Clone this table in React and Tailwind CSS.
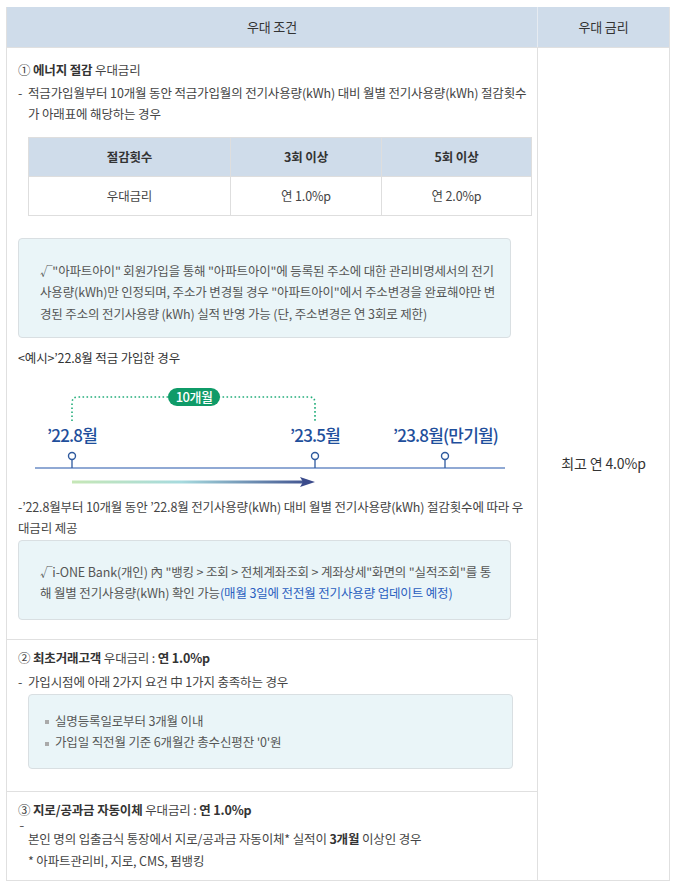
const Timeline = () => (
  <div className="relative h-[127px] w-[493px]">
    <svg className="absolute left-0 top-0" width="493" height="127" viewBox="0 0 493 127">
      <defs>
        <linearGradient id="arrowGrad" x1="54" y1="0" x2="297" y2="0" gradientUnits="userSpaceOnUse">
          <stop offset="0" stopColor="#c6e7b6" />
          <stop offset="0.45" stopColor="#a6dade" />
          <stop offset="1" stopColor="#3b4b8b" />
        </linearGradient>
      </defs>
      <path
        d="M54 52 V34 Q54 28 60 28 H291 Q297 28 297 34 V52"
        fill="none"
        stroke="#22ad7a"
        strokeWidth="1.6"
        strokeDasharray="1.6 2.4"
      />
      <line x1="17" y1="99" x2="487" y2="99" stroke="#6b8cc6" strokeWidth="1.3" />
      {[54, 297, 427].map((x) => (
        <g key={x}>
          <line x1={x} y1="90.5" x2={x} y2="99" stroke="#2f5a9e" strokeWidth="1.3" />
          <circle cx={x} cy="87" r="3.5" fill="#fff" stroke="#2f5a9e" strokeWidth="1.4" />
        </g>
      ))}
      <line x1="54" y1="113" x2="286" y2="113" stroke="url(#arrowGrad)" strokeWidth="3" />
      <polygon points="282,108 297,113 282,118 285,113" fill="#3b4b8b" />
    </svg>
    <div className="absolute left-[150px] top-[19px] flex h-[18px] w-[52px] items-center justify-center rounded-full bg-[#0f9b68] text-[13px] leading-none font-medium tracking-[-0.5px] text-white">
      10개월
    </div>
    <div className="absolute left-[29px] top-[56px] text-[17px] leading-[20px] font-medium tracking-[-0.8px] text-[#1f4f9c]">’22.8월</div>
    <div className="absolute left-[272px] top-[56px] text-[17px] leading-[20px] font-medium tracking-[-0.8px] text-[#1f4f9c]">’23.5월</div>
    <div className="absolute left-[375px] top-[56px] text-[17px] leading-[20px] font-medium tracking-[-0.8px] text-[#1f4f9c]">’23.8월(만기월)</div>
  </div>
)

const Dash = () => <span className="inline-block w-[10px]">-</span>

const Square = () => <span className="mr-[6px] inline-block h-[4px] w-[4px] bg-[#aaa] align-middle" />

export default function App() {
  return (
    <div className="min-h-screen bg-white pl-[6px] pt-[7px] font-['Noto_Sans_CJK_KR','Noto_Sans',sans-serif] text-[12.5px] leading-[21.5px] tracking-[-0.15px] text-[#444]">
      <div className="flex w-[664px] flex-col border-x border-b border-[#e0e0e0]">
        <div className="flex h-[41px] border-b border-[#e0e0e0] bg-[#cfdcea] text-[13px] text-[#333]">
          <div className="flex w-[530px] items-center justify-center">우대 조건</div>
          <div className="flex flex-1 items-center justify-center border-l border-[#e6ebf1]">우대 금리</div>
        </div>

        <div className="flex">
          <div className="flex w-[530px] flex-col">
            {/* ① 에너지 절감 */}
            <section className="border-b border-[#e0e0e0] pb-[19px] pl-[11px] pr-[5px] pt-[11px]">
              <p>
                ① <b className="font-bold text-[#333]">에너지 절감</b> 우대금리
              </p>
              <p className="mt-[1px]">
                <Dash />
                적금가입월부터 10개월 동안 적금가입월의 전기사용량(kWh) 대비 월별 전기사용량(kWh) 절감횟수
                <br />
                <span className="pl-[10px]">가 아래표에 해당하는 경우</span>
              </p>

              <div className="ml-[10px] mt-[12px] grid grid-cols-[201px_151px_1fr] border border-[#dedede] text-center">
                <div className="flex h-[38px] items-center justify-center bg-[#cfdcea] font-semibold text-[#333]">절감횟수</div>
                <div className="flex h-[38px] items-center justify-center border-l border-[#dedede] bg-[#cfdcea] font-semibold text-[#333]">3회 이상</div>
                <div className="flex h-[38px] items-center justify-center border-l border-[#dedede] bg-[#cfdcea] font-semibold text-[#333]">5회 이상</div>
                <div className="flex h-[39px] items-center justify-center border-t border-[#dedede]">우대금리</div>
                <div className="flex h-[39px] items-center justify-center border-l border-t border-[#dedede]">연 1.0%p</div>
                <div className="flex h-[39px] items-center justify-center border-l border-t border-[#dedede]">연 2.0%p</div>
              </div>

              <div className="mt-[22px] w-[493px] rounded-[4px] border border-[#d9dfe2] bg-[#eaf5f8] pb-[13px] pl-[21px] pt-[21px] text-[#555]">
                √"아파트아이" 회원가입을 통해 "아파트아이"에 등록된 주소에 대한 관리비명세서의 전기
                <br />
                사용량(kWh)만 인정되며, 주소가 변경될 경우 "아파트아이"에서 주소변경을 완료해야만 변
                <br />
                경된 주소의 전기사용량 (kWh) 실적 반영 가능 (단, 주소변경은 연 3회로 제한)
              </div>

              <p className="mt-[9px] text-[#333]">&lt;예시&gt;’22.8월 적금 가입한 경우</p>

              <Timeline />

              <p>
                -’22.8월부터 10개월 동안 ’22.8월 전기사용량(kWh) 대비 월별 전기사용량(kWh) 절감횟수에 따라 우
                <br />
                대금리 제공
              </p>

              <div className="mt-[1px] w-[493px] rounded-[4px] border border-[#d9dfe2] bg-[#eaf5f8] pb-[15px] pl-[21px] pt-[20px] text-[#555]">
                √i-ONE Bank(개인) 內 "뱅킹 &gt; 조회 &gt; 전체계좌조회 &gt; 계좌상세"화면의 "실적조회"를 통
                <br />
                해 월별 전기사용량(kWh) 확인 가능<span className="text-[#2a5fc0]">(매월 3일에 전전월 전기사용량 업데이트 예정)</span>
              </div>
            </section>

            {/* ② 최초거래고객 */}
            <section className="border-b border-[#e0e0e0] pb-[22px] pl-[11px] pr-[5px] pt-[7px]">
              <p>
                ② <b className="font-bold text-[#333]">최초거래고객</b> 우대금리 : <b className="font-bold text-[#333]">연 1.0%p</b>
              </p>
              <p className="mt-[3px]">
                <Dash />
                가입시점에 아래 2가지 요건 中 1가지 충족하는 경우
              </p>
              <div className="ml-[10px] mt-[1px] w-[485px] rounded-[4px] border border-[#d9dfe2] bg-[#eaf5f8] pb-[15px] pl-[16px] pt-[15px] text-[#555]">
                <p>
                  <Square />실명등록일로부터 3개월 이내
                </p>
                <p>
                  <Square />가입일 직전월 기준 6개월간 총수신평잔 '0'원
                </p>
              </div>
            </section>

            {/* ③ 지로/공과금 */}
            <section className="pb-[9px] pl-[11px] pr-[5px] pt-[7px]">
              <p>
                ③ <b className="font-bold text-[#333]">지로/공과금 자동이체</b> 우대금리 : <b className="font-bold text-[#333]">연 1.0%p</b>
              </p>
              <p className="mt-[8px]">
                <span className="relative -top-[8px] inline-block w-[10px]">¯</span>
                본인 명의 입출금식 통장에서 지로/공과금 자동이체* 실적이 <b className="font-bold text-[#333]">3개월</b> 이상인 경우
              </p>
              <p className="pl-[10px]">* 아파트관리비, 지로, CMS, 펌뱅킹</p>
            </section>
          </div>

          <div className="flex flex-1 items-center justify-center border-l border-[#e0e0e0] text-[14px] text-[#333]">
            최고 연 4.0%p
          </div>
        </div>
      </div>
    </div>
  )
}
